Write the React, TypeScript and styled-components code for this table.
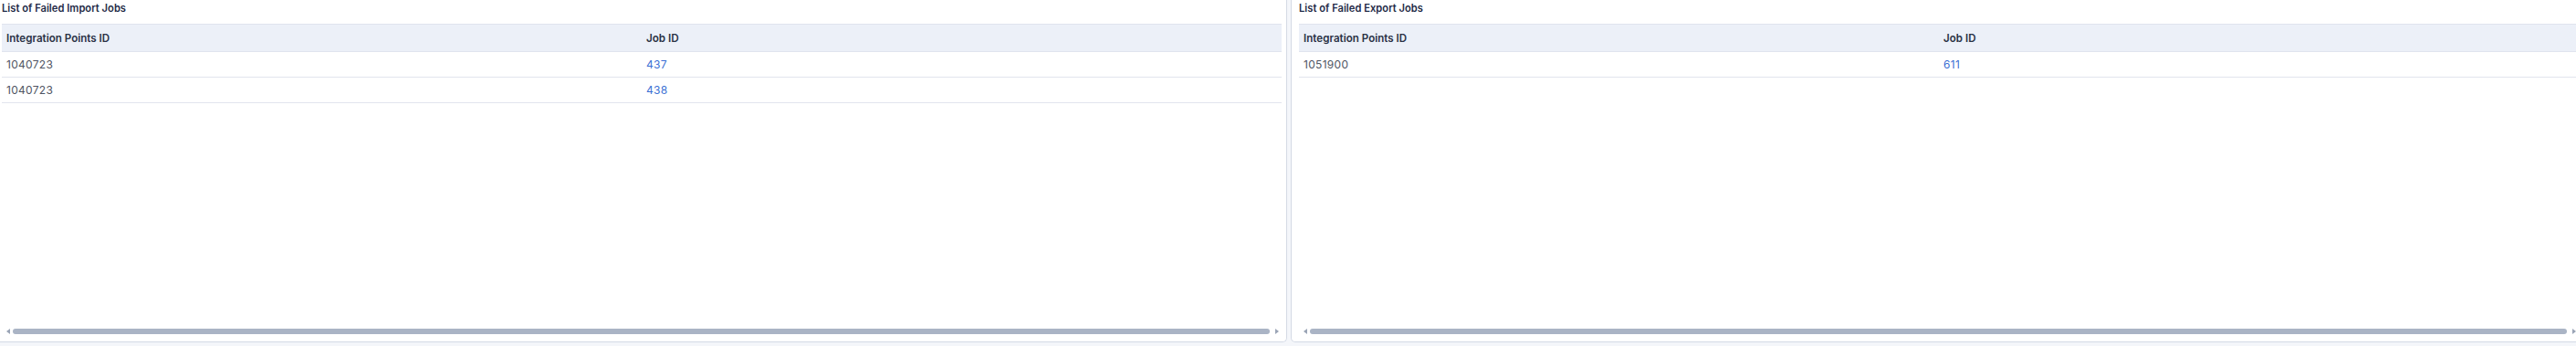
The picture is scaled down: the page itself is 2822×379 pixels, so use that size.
import React from "react";
import styled, { createGlobalStyle } from "styled-components";

const Global = createGlobalStyle`
  html, body { margin: 0; padding: 0; }
  body {
    background: #f4f6fa;
    overflow: hidden;
    font-family: Inter, "Noto Sans", "Liberation Sans", sans-serif;
  }
`;

const Page = styled.div`
  display: flex;
  gap: 4px;
  margin-left: -7px;
  width: 2838px;
  height: 379px;
`;

const Panel = styled.section`
  flex: 0 0 1417px;
  box-sizing: border-box;
  height: 375px;
  background: #ffffff;
  border: 1px solid #d4dae5;
  border-top: none;
  border-radius: 0 0 5px 5px;
  display: flex;
  flex-direction: column;
  padding: 0 5px 0 8px;
`;

const Title = styled.h2`
  margin: 0;
  height: 26px;
  box-sizing: border-box;
  padding-top: 1px;
  font-size: 11.2px;
  line-height: 16px;
  font-weight: 600;
  color: #1f2b47;
`;

const TableWrap = styled.div`
  flex: 1;
`;

const Table = styled.table`
  width: 100%;
  border-collapse: collapse;
  table-layout: fixed;
`;

const HeadCell = styled.th`
  height: 29px;
  padding: 0 5px;
  text-align: left;
  background: #ecf0f8;
  border-top: 1px solid #e0e4ee;
  border-bottom: 1px solid #e0e4ee;
  font-size: 11.6px;
  font-weight: 600;
  color: #2a3245;
`;

const Cell = styled.td<{ $link?: boolean }>`
  height: 27px;
  padding: 0 5px;
  border-bottom: 1px solid #e2e5ee;
  font-size: 12px;
  font-weight: 400;
  color: ${(p) => (p.$link ? "#3b6fd4" : "#4f5563")};
  letter-spacing: 0.3px;
`;

const ScrollBar = styled.div`
  display: flex;
  align-items: center;
  height: 14px;
  margin-bottom: 4px;
  padding: 0 3px 0 5px;
  gap: 3px;
`;

const Arrow = styled.span<{ $dir: "left" | "right" }>`
  flex: none;
  width: 0;
  height: 0;
  border-top: 3px solid transparent;
  border-bottom: 3px solid transparent;
  ${(p) =>
    p.$dir === "left"
      ? "border-right: 4px solid #9aa4b6;"
      : "border-left: 4px solid #9aa4b6;"}
`;

const Thumb = styled.div`
  flex: 1;
  height: 6px;
  border-radius: 3px;
  background: #aab4c5;
  margin: 0 3px 0 0;
`;

type Row = { ip: string; job: string };

const JobPanel = ({ title, rows }: { title: string; rows: Row[] }) => (
  <Panel>
    <Title>{title}</Title>
    <TableWrap>
      <Table>
        <thead>
          <tr>
            <HeadCell>Integration Points ID</HeadCell>
            <HeadCell>Job ID</HeadCell>
          </tr>
        </thead>
        <tbody>
          {rows.map((r, i) => (
            <tr key={i}>
              <Cell>{r.ip}</Cell>
              <Cell $link>{r.job}</Cell>
            </tr>
          ))}
        </tbody>
      </Table>
    </TableWrap>
    <ScrollBar>
      <Arrow $dir="left" />
      <Thumb />
      <Arrow $dir="right" />
    </ScrollBar>
  </Panel>
);

export default function App() {
  return (
    <>
      <Global />
      <Page>
        <JobPanel
          title="List of Failed Import Jobs"
          rows={[
            { ip: "1040723", job: "437" },
            { ip: "1040723", job: "438" },
          ]}
        />
        <JobPanel
          title="List of Failed Export Jobs"
          rows={[{ ip: "1051900", job: "611" }]}
        />
      </Page>
    </>
  );
}
